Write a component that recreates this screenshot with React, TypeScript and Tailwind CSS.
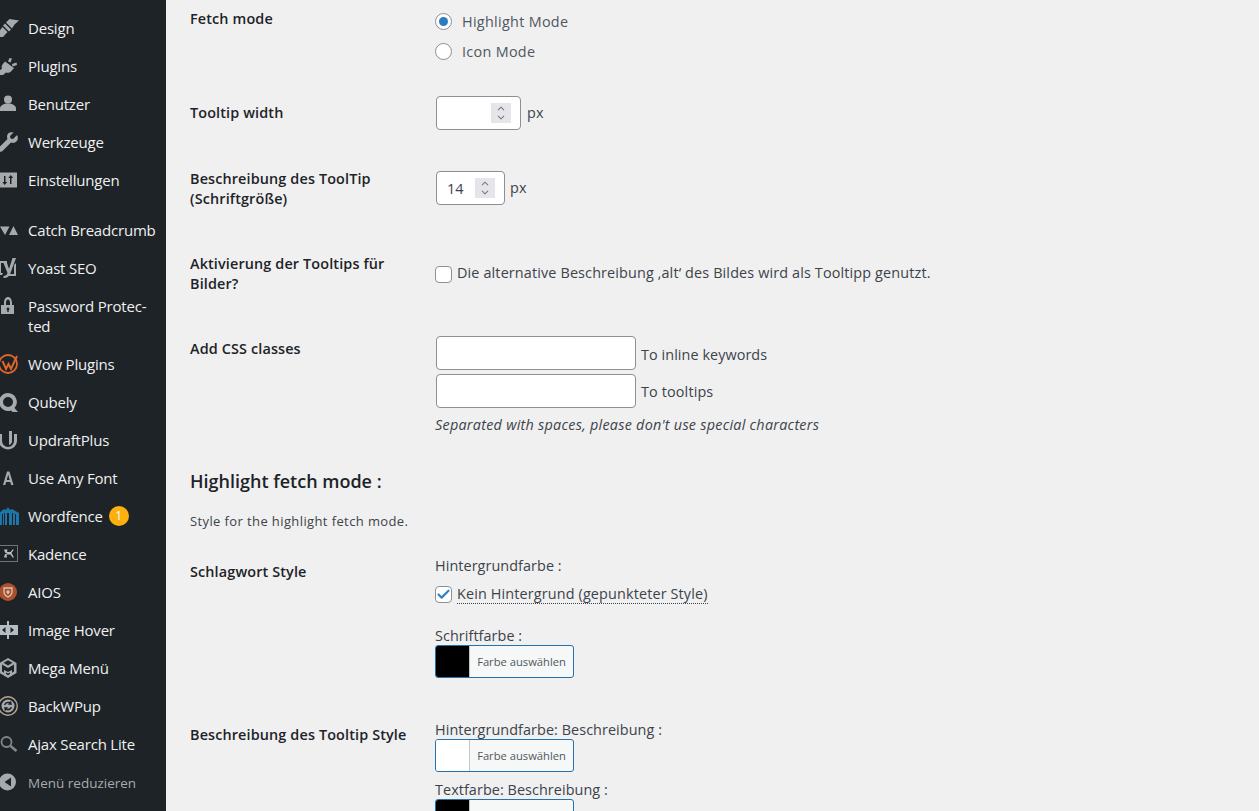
import React from 'react';
import { ChevronUp, ChevronDown, Check } from 'lucide-react';

const Ico: React.FC<{ children: React.ReactNode; vb?: string }> = ({ children, vb = '0 0 20 20' }) => (
  <svg viewBox={vb} className="w-[20px] h-[20px] shrink-0 overflow-visible fill-[#a7aaad]">{children}</svg>
);

const icons: Record<string, React.ReactNode> = {
  design: <Ico><path d="M19 2.500 9.500 1 6 4.500l6 6 2.500-4zM5 5.500l6 6-2 2-6-6zM2.500 9 7.500 14 3 19H-1v-5.500z" /></Ico>,
  plugins: <Ico><path d="M9.500 2 12 2.500 10.500 6.500 8 5.500zM16.500 6.500 17 9l-4.500 1.500L12 8zM5 5.500l9 6.500-3 3.500c-1.500 1.500-3.500 1.500-5 1L3 19H-1v-4l3-2.500c-.5-1.500-.5-3 .5-4z" /></Ico>,
  users: <Ico><circle cx="8" cy="5.500" r="4" /><path d="M0 17v-2.500C0 11.500 3.500 9.500 8 9.500s8 2 8 5V17z" /></Ico>,
  tools: <Ico><path d="M16.500 3.500 13 7l-2.500-.500L10 4l3.500-3.500C10.500-.500 7 1 7 4.500c0 1 .2 1.800.5 2.500L-1 15.500c-1 1-1 2.500 0 3.500s2.500 1 3.500 0L11 10.500c4 1.500 8-1.500 6.500-7z" /></Ico>,
  settings: <Ico><path fillRule="evenodd" d="M0 2.500h17v15H0zM4 6v6H2.250l2.500 3 2.500-3H5.500V6zm7.500 8V8h1.750l-2.500-3-2.500 3H10v6z" /></Ico>,
  catch: <Ico><path d="M0 6.500h9.500L5 15zM13.500 6 18 15H9z" /></Ico>,
  yoast: <Ico><path d="M-1 3h8v2H1v10h2l-1 2H-1zM16 0h-3.500L9 11 7 5H3.500l4 10c-.5 2-2 3-4 3v2c4 0 6-2 7-5zM14 7v9H9l-1 2h8V5z" /></Ico>,
  lock: <Ico><path fillRule="evenodd" d="M4 9V6.500C4 3.500 5.700 1 8 1s4 2.500 4 5.500V9h2v9H1V9zm2 0h4V6.500C10 5 9.200 3.500 8 3.500S6 5 6 6.500zm2 2.500a1.500 1.500 0 0 0-.7 2.800V16h1.400v-1.700A1.500 1.500 0 0 0 8 11.500z" /></Ico>,
  wow: (
    <Ico>
      <circle cx="8" cy="10" r="9" className="fill-none stroke-[#e0652a]" strokeWidth="1.800" />
      <path d="M2.500 7l3.500 8 2.500-5 2.500 5 6-13" className="fill-none stroke-[#e0652a]" strokeWidth="2" />
    </Ico>
  ),
  qubely: <Ico><path fillRule="evenodd" d="M8 1a9 9 0 1 0 3 17.500l1.500 1.500H18l-3.500-4A9 9 0 0 0 8 1zm0 4a5 5 0 1 1 0 10A5 5 0 0 1 8 5z" /></Ico>,
  updraft: (
    <Ico>
      <path d="M-1 4h3v7a6 6 0 0 0 12 0V4h3v7a9 8.500 0 0 1-18 0z" />
      <path d="M9 1h3v11a4.500 4.500 0 0 1-3 3z" />
    </Ico>
  ),
  font: <Ico><path fillRule="evenodd" d="M7 3.500h2.400L13.500 17h-2.400l-.8-3H6.100l-.8 3H3zM8.200 6.500 6.700 12h3z" /></Ico>,
  wordfence: (
    <Ico>
      <path className="fill-[#1f75a8]" d="M-1 7 4 3l2 1 2-3 2 3 2-1 7 4v12h-3V8h-1v11h-2V7h-1v12H9V7H7v12H5V7H4v12H3V8H2v11h-3z" />
    </Ico>
  ),
  kadence: (
    <Ico>
      <path fillRule="evenodd" className="fill-[#6f7478]" d="M-1 1h19v17H-1zm1 1v15h17V2z" />
      <path d="M4 5.500h3.500L7 8h3.500l2-2.500h1.500l-2.500 3.500 2.500 4.500h-1.500l-2-3H6.500l.5 3H4l1-3.500h2.500L5 8.500z" className="fill-[#b9bcbf]" />
    </Ico>
  ),
  aios: (
    <Ico>
      <circle cx="8" cy="10" r="9" className="fill-[#a9512e]" />
      <path d="M4 6h8v4c0 2.500-2 4-4 5-2-1-4-2.500-4-5z" className="fill-none stroke-[#dcc2b2]" strokeWidth="1.300" />
      <path d="M6.500 8.500h3v2l-1.500 2-1.500-2z" className="fill-[#dcc2b2]" />
    </Ico>
  ),
  hover: (
    <Ico>
      <path d="M-1 5h8v10h-8zM9 5h9v10H9z" className="fill-[#b5bcc4]" />
      <path d="M7 1h2v18H7z" className="fill-[#b5bcc4]" />
      <path d="M5.500 7v6l-3.500-3zM10.500 7v6l3.500-3z" className="fill-[#1d2327]" />
    </Ico>
  ),
  mega: <Ico><path fillRule="evenodd" d="M8 0l8.500 5v10L8 20l-8.500-5V5zM2 6.500v7l2 1.200V12l4 2 4-2v2.700l2-1.200v-7L8 10zM3.500 4.800 8 7.500l4.500-2.700L8 2.300zM6 14.500v1.500l2 1.200 2-1.200v-1.500l-2 1z" /></Ico>,
  backwpup: (
    <Ico>
      <circle cx="8" cy="10" r="9.300" className="fill-none stroke-[#b9a590]" strokeWidth="1.400" />
      <circle cx="8" cy="10" r="6.500" />
      <path d="M4 9c.5-3 3.500-4 6-3l1-1.500 1 4.500-4.500-.5 1.500-1c-1.500-.5-3 0-3.500 1.500zM12 11c-.5 3-3.500 4-6 3l-1 1.500-1-4.500 4.500.5-1.500 1c1.500.5 3 0 3.500-1.500z" className="fill-[#1d2327]" />
    </Ico>
  ),
  search: (
    <Ico>
      <circle cx="6.500" cy="8" r="5" className="fill-none stroke-[#83878b]" strokeWidth="1.800" />
      <path d="M10.500 12 16.500 17" className="fill-none stroke-[#83878b]" strokeWidth="2.600" />
    </Ico>
  ),
};

type MenuEntry = { label: React.ReactNode; icon: string; gap?: boolean };

const menu: MenuEntry[] = [
  { label: 'Design', icon: 'design' },
  { label: 'Plugins', icon: 'plugins' },
  { label: 'Benutzer', icon: 'users' },
  { label: 'Werkzeuge', icon: 'tools' },
  { label: 'Einstellungen', icon: 'settings' },
  { label: 'Catch Breadcrumb', icon: 'catch', gap: true },
  { label: 'Yoast SEO', icon: 'yoast' },
  { label: <>Password Protec-<br />ted</>, icon: 'lock' },
  { label: 'Wow Plugins', icon: 'wow' },
  { label: 'Qubely', icon: 'qubely' },
  { label: 'UpdraftPlus', icon: 'updraft' },
  { label: 'Use Any Font', icon: 'font' },
  {
    label: (
      <span className="flex items-center">
        Wordfence
        <span className="ml-[6px] w-[20px] h-[20px] rounded-full bg-[#fdb00e] text-white text-[12px] flex items-center justify-center">1</span>
      </span>
    ),
    icon: 'wordfence',
  },
  { label: 'Kadence', icon: 'kadence' },
  { label: 'AIOS', icon: 'aios' },
  { label: 'Image Hover', icon: 'hover' },
  { label: 'Mega Menü', icon: 'mega' },
  { label: 'BackWPup', icon: 'backwpup' },
  { label: 'Ajax Search Lite', icon: 'search' },
];

const Sidebar = () => (
  <div className="w-[166px] shrink-0 bg-[#1d2327] pt-[9px] text-[#f0f0f1] text-[15px] leading-[20px] tracking-[-0.2px]">
    {menu.map((m, i) => (
      <div key={i} className={`flex py-[9px] ${m.gap ? 'mt-[12px]' : ''}`}>
        <span className="w-[28px] shrink-0">{icons[m.icon]}</span>
        <span>{m.label}</span>
      </div>
    ))}
    <div className="flex items-center py-[9px] text-[#a7aaad] text-[13.5px] tracking-[0px]">
      <span className="w-[28px] shrink-0">
        <Ico>
          <path fillRule="evenodd" d="M7.500 1.500a8.500 8.500 0 1 1 0 17 8.500 8.500 0 0 1 0-17zM11 5.500 4.500 10l6.500 4.500z" />
        </Ico>
      </span>
      <span className="translate-y-px">Menü reduzieren</span>
    </div>
  </div>
);

const Spinner = () => (
  <span className="w-[20px] h-[20px] bg-[#e6e6ea] flex flex-col items-center justify-center text-[#7d7d82]">
    <ChevronUp size={12} strokeWidth={2.5} className="-mb-[1px]" />
    <ChevronDown size={12} strokeWidth={2.5} className="-mt-[1px]" />
  </span>
);

const NumberBox: React.FC<{ value?: string; width: string }> = ({ value, width }) => (
  <span className={`${width} h-[34px] bg-white border border-[#8c8f94] rounded-[4px] flex items-center justify-between pl-[10px] pr-[9px]`}>
    <span className="pt-[1px]">{value}</span>
    <Spinner />
  </span>
);

const ColorButton: React.FC<{ color: string }> = ({ color }) => (
  <div className="w-[139px] h-[33px] flex border border-[#2271b1] rounded-[3px] bg-[#f6f7f7] overflow-hidden">
    <span className="w-[34px] h-full border-r border-[#c3c4c7]" style={{ backgroundColor: color }} />
    <span className="flex-1 text-center text-[11.2px] tracking-normal leading-[32px] text-[#50575e]">Farbe auswählen</span>
  </div>
);

const Box: React.FC<{ checked?: boolean }> = ({ checked }) => (
  <span className="w-[17px] h-[17px] shrink-0 bg-white border border-[#8c8f94] rounded-[4px] flex items-center justify-center">
    {checked && <Check size={15} strokeWidth={3.5} className="text-[#3582c4]" />}
  </span>
);

const Radio: React.FC<{ on?: boolean; label: string }> = ({ on, label }) => (
  <div className="h-[30px] flex items-center">
    <span className="w-[17px] h-[17px] bg-white border border-[#8c8f94] rounded-full flex items-center justify-center">
      {on && <span className="w-[9px] h-[9px] rounded-full bg-[#2e7cc0]" />}
    </span>
    <span className="ml-[10px] pt-[1px] text-[#50575e] tracking-[0.3px]">{label}</span>
  </div>
);

const TextBox = () => <span className="block w-[200px] h-[34px] bg-white border border-[#8c8f94] rounded-[4px]" />;

const FieldLabel: React.FC<{ children: React.ReactNode }> = ({ children }) => (
  <div className="translate-y-px tracking-[0.07px]">{children}</div>
);

const Row: React.FC<{ label: React.ReactNode; className: string; labelTop: string; children: React.ReactNode }> = ({ label, className, labelTop, children }) => (
  <div className={`flex ${className}`}>
    <div className={`w-[245px] shrink-0 font-semibold text-[#1d2327] pr-[10px] ${labelTop}`}>
      <div className="translate-y-px">{label}</div>
    </div>
    <div className="flex-1">{children}</div>
  </div>
);

export default function App() {
  return (
    <div className="h-screen overflow-hidden flex bg-[#f0f0f1] text-[14.4px] tracking-[0.14px] leading-[20px] text-[#3c434a] font-['Open_Sans','Noto_Sans',sans-serif]">
      <Sidebar />
      <div className="flex-1 pl-[24px]">
        <Row label="Fetch mode" className="mt-[6px]" labelTop="pt-[2px]">
          <Radio on label="Highlight Mode" />
          <Radio label="Icon Mode" />
        </Row>
        <Row label="Tooltip width" className="mt-[30px]" labelTop="pt-[6px]">
          <div className="flex items-center ml-[1px]">
            <NumberBox width="w-[85px]" />
            <span className="ml-[6px]">px</span>
          </div>
        </Row>
        <Row label={<>Beschreibung des ToolTip<br />(Schriftgröße)</>} className="mt-[38px]" labelTop="">
          <div className="flex items-center ml-[1px] mt-[3px]">
            <NumberBox width="w-[69px]" value="14" />
            <span className="ml-[5px]">px</span>
          </div>
        </Row>
        <Row label={<>Aktivierung der Tooltips für<br />Bilder?</>} className="mt-[45px]" labelTop="">
          <div className="flex items-start mt-[10px]">
            <span className="mt-[3px]"><Box /></span>
            <span className="ml-[5px]">Die alternative Beschreibung ‚alt‘ des Bildes wird als Tooltipp genutzt.</span>
          </div>
        </Row>
        <Row label="Add CSS classes" className="mt-[43px]" labelTop="pt-[2px]">
          <div className="flex items-center ml-[1px]">
            <TextBox />
            <span className="ml-[5px] pt-[4px] tracking-[0.07px]">To inline keywords</span>
          </div>
          <div className="flex items-center ml-[1px] mt-[4px]">
            <TextBox />
            <span className="ml-[5px] pt-[2px]">To tooltips</span>
          </div>
          <p className="italic mt-[6px] tracking-[0.25px] translate-y-px">Separated with spaces, please don't use special characters</p>
        </Row>
        <h2 className="mt-[35px] text-[18px] leading-[24px] font-semibold tracking-normal text-[#1d2327]">Highlight fetch mode :</h2>
        <p className="mt-[18px] text-[13px] tracking-[0.39px]">Style for the highlight fetch mode.</p>
        <Row label="Schlagwort Style" className="mt-[24px]" labelTop="pt-[6px]">
          <FieldLabel>Hintergrundfarbe :</FieldLabel>
          <div className="flex items-center mt-[9px]">
            <Box checked />
            <span className="ml-[5px] border-b border-dotted border-[#3c434a] leading-[19px]">Kein Hintergrund (gepunkteter Style)</span>
          </div>
          <div className="mt-[21px]"><FieldLabel>Schriftfarbe :</FieldLabel></div>
          <ColorButton color="#000000" />
        </Row>
        <Row label="Beschreibung des Tooltip Style" className="mt-[41px]" labelTop="pt-[5px]">
          <FieldLabel>Hintergrundfarbe: Beschreibung :</FieldLabel>
          <ColorButton color="#ffffff" />
          <div className="mt-[7px]"><FieldLabel>Textfarbe: Beschreibung :</FieldLabel></div>
          <ColorButton color="#000000" />
        </Row>
      </div>
    </div>
  );
}
